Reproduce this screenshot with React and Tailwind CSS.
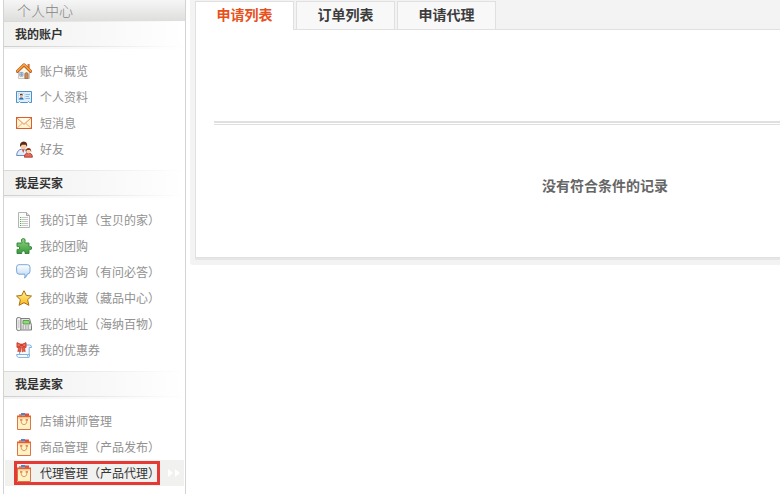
import { useState } from "react";

function HouseIcon() {
	return (
		<svg viewBox="0 0 16 16" className="w-4 h-4 shrink-0">
			<path d="M2.500 8v7.500h11V8L8 3z" fill="#fdf6e3" stroke="#b9a58a" strokeWidth=".6" />
			<rect x="11.500" y="1" width="2.200" height="4" fill="#d9743a" />
			<path d="M1.300 8.300 8 1.800l6.700 6.500" fill="none" stroke="#b5531c" strokeWidth="3" strokeLinecap="round" strokeLinejoin="round" />
			<path d="M1.300 8.100 8 1.700l6.700 6.400" fill="none" stroke="#f7a23c" strokeWidth="1.600" strokeLinecap="round" strokeLinejoin="round" />
			<path d="M8.800 15.500v-5q1.700-2 3.400 0v5z" fill="#c98a5a" stroke="#8a5a38" strokeWidth=".6" />
			<path d="M3.800 9.400H7v3.800H3.800zM5.400 9.400v3.800M3.800 11.300H7" fill="#dbe9fb" stroke="#6f93c8" strokeWidth=".7" />
		</svg>
	);
}

function CardIcon() {
	return (
		<svg viewBox="0 0 16 16" className="w-4 h-4 shrink-0">
			<path d="M.5 2.500h15v11h-2l-1-1-1 1h-7l-1-1-1 1h-2z" fill="#dff0fd" stroke="#4c8fca" />
			<rect x="2.500" y="4.500" width="5.500" height="6" fill="#fff" stroke="#9cc5e8" strokeWidth=".5" />
			<path d="M3 10.500q0-2.300 2.300-2.300t2.300 2.300z" fill="#2c6bad" />
			<circle cx="5.300" cy="6.800" r="1.500" fill="#f4b183" />
			<path d="M3.700 6.600q0-1.900 1.600-1.900t1.600 1.900l-1.600-.8z" fill="#3a2a22" />
			<path d="M9.500 5.500H14M9.500 7.500H13M9.500 9.500H14" stroke="#8dbbe3" />
		</svg>
	);
}

function MailIcon() {
	return (
		<svg viewBox="0 0 16 16" className="w-4 h-4 shrink-0">
			<rect x=".5" y="2.500" width="15" height="11" fill="#fdf3d0" stroke="#d9602e" />
			<path d="m1 13.200 5.300-5M15 13.200l-5.300-5" stroke="#efab74" />
			<path d="m1 3 7 6.300L15 3" fill="#fffae8" stroke="#e58a50" />
		</svg>
	);
}

function FriendsIcon() {
	return (
		<svg viewBox="0 0 17 17" className="w-[17px] h-[17px] -mr-px shrink-0">
			<path d="M.6 14.500q.4-5.800 5-6.300h3q2.400.6 2.400 6.300z" fill="#e3edfb" stroke="#5d7fb8" strokeWidth=".9" />
			<path d="m6 8.500 1.200 3.500 1.300-3.500z" fill="#d8412b" />
			<circle cx="7.600" cy="5.300" r="3" fill="#f8cda4" />
			<path d="M4 6Q3.400.700 7.800.500 12 .700 11 6L9.800 3.800 6 3.700z" fill="#5b2a16" />
			<path d="M8.400 16.200q0-4.200 4-4.200t4 4.200z" fill="#e26a5c" stroke="#ab2e25" strokeWidth=".8" />
			<circle cx="12.500" cy="10.300" r="2.100" fill="#fad3ad" />
			<path d="M9.700 11q0-4 2.800-4t2.800 4l-1.300-2h-3z" fill="#8c351b" />
		</svg>
	);
}

function OrderIcon() {
	return (
		<svg viewBox="0 0 16 16" className="w-4 h-4 shrink-0">
			<path d="M2.500.5h8l3 3v12h-11z" fill="#fbfbfb" stroke="#b3b3b3" />
			<path d="M10.500.5v3h3" fill="#ddd" stroke="#a3a3a3" />
			<path d="M4 5.500h1.300M4 7.500h1.300M4 9.500h1.300M4 11.500h1.300M4 13.500h1.300" stroke="#4faa4a" />
			<path d="M6 5.500h6M6 7.500h6M6 9.500h6M6 11.500h6M6 13.500h6" stroke="#c6c6c6" />
		</svg>
	);
}

function PuzzleIcon() {
	return (
		<svg viewBox="0 0 16 16" className="w-4 h-4 shrink-0">
			<defs>
				<linearGradient id="puzzle" x1="0" y1="0" x2="0" y2="1">
					<stop offset="0" stopColor="#8fd47f" />
					<stop offset="1" stopColor="#3a9a3c" />
				</linearGradient>
			</defs>
			<path
				d="M1 5h4.800q.4-.8-.3-1.500Q4.800.600 7.300.500q2.500.1 1.800 3Q8.500 4.200 9 5h4v3.600q.6.300 1.200-.1 1.400-.3 1.400 1.500t-1.400 1.500q-.6-.4-1.200 0v4H9q-.2-.7.100-1.200 0-1.400-1.700-1.400t-1.700 1.400q.3.500.1 1.200H1v-4q.6-.4 1.200 0 1.500.1 1.500-1.500T2.200 8.500q-.6.300-1.200 0z"
				fill="url(#puzzle)"
				stroke="#2e7f34"
				strokeWidth=".9"
			/>
		</svg>
	);
}

function ChatIcon() {
	return (
		<svg viewBox="0 0 16 16" className="w-4 h-4 shrink-0">
			<defs>
				<linearGradient id="chat" x1="0" y1="0" x2="0" y2="1">
					<stop offset="0" stopColor="#fff" />
					<stop offset="1" stopColor="#b5d5f6" />
				</linearGradient>
			</defs>
			<path
				d="M3 .7h8.500q2.500 0 2.500 2.500v4q0 2.900-2.800 3-.2 2.600-2.700 3.800.9-2 .3-3.800H3Q.6 10.200.6 7.200v-4Q.6.700 3 .7z"
				fill="url(#chat)"
				stroke="#6d9ed2"
				strokeWidth=".9"
			/>
		</svg>
	);
}

function StarIcon() {
	return (
		<svg viewBox="0 0 16 16" className="w-4 h-4 shrink-0">
			<defs>
				<linearGradient id="star" x1="0" y1="0" x2="0" y2="1">
					<stop offset="0" stopColor="#fff29a" />
					<stop offset="1" stopColor="#fbb81c" />
				</linearGradient>
			</defs>
			<path
				d="m8 .7 2.300 4.700 5.200.6-3.900 3.700 1.300 5.600L8 12.700l-4.900 2.600 1.300-5.600L.5 6l5.200-.6z"
				fill="url(#star)"
				stroke="#a8700c"
				strokeLinejoin="round"
			/>
		</svg>
	);
}

function PhoneIcon() {
	return (
		<svg viewBox="0 0 16 16" className="w-4 h-4 shrink-0">
			<path d="M4.500 2.500h9l2 7v4.500h-11z" fill="#e6e6e6" stroke="#7d7d7d" strokeLinejoin="round" />
			<rect x=".6" y="1.500" width="4.300" height="13" rx="1.600" fill="#f0f0f0" stroke="#7d7d7d" />
			<path d="M2.800 4v8" stroke="#c4c4c4" />
			<path d="M7 4.500h6l.9 3.500H7z" fill="#8fdb76" stroke="#4b8f3e" strokeWidth=".8" />
			<path d="M6.500 10h7.500M6.500 12h7.500" stroke="#8a8a8a" strokeDasharray="1.500 1" />
		</svg>
	);
}

function CouponIcon() {
	return (
		<svg viewBox="0 0 16 16" className="w-4 h-4 shrink-0">
			<path d="M3.500 3h10.300q1.700.1 1.700 2.500h-2.300V13h-9.700z" fill="#f3f9ff" stroke="#7fb0e0" />
			<path d="M2 12.500h9.500q-.3 2.500 1.700 2.900H2.500Q.5 15 .6 12.500z" fill="#fff" stroke="#7fb0e0" />
			<path d="M11.500 12.500h2q.3 2.400-.8 2.900" fill="#dcecfb" stroke="#7fb0e0" />
			<path d="M2.500 5h2.700L4.600 10l-1.500-1-1.300.7zM5.800 5h2.700l.7 4.700-1.300-.7-1.500 1z" fill="#ec5f45" stroke="#c2301f" strokeWidth=".6" />
			<path d="M4.700 2.300 1 .700v4.800l3.700-1.600zM6.300 2.300l3.700-1.600v4.800L6.300 3.900z" fill="#f0705a" stroke="#c2301f" strokeWidth=".9" strokeLinejoin="round" />
			<rect x="4.400" y="1.700" width="2.200" height="3" fill="#d63c28" />
		</svg>
	);
}

function BagIcon() {
	return (
		<svg viewBox="0 0 16 17" className="w-4 h-[17px] shrink-0">
			<path d="M1.500 3.500h13v13h-13z" fill="#fff3c4" stroke="#dd7347" />
			<path d="M3 1h2.500v2H3z" fill="#f0906a" />
			<path d="M5 0h4v2.500H5z" fill="#4a86cf" />
			<path d="M9 .5h4V3H9z" fill="#e2493a" />
			<path d="M1 2.500h14v1.500H1z" fill="#dc6238" />
			<path d="M2 4h12v1.500H2z" fill="#f9c58f" />
			<path d="M5.200 7v2q.4 2.700 2.800 2.700T10.800 9V7" fill="none" stroke="#e69a70" />
			<path d="M4 6.800h2.400M9.600 6.800H12" stroke="#d8703f" strokeWidth="1.200" />
		</svg>
	);
}

const sections = [
	{
		title: "我的账户",
		items: [
			{ label: "账户概览", Icon: HouseIcon },
			{ label: "个人资料", Icon: CardIcon },
			{ label: "短消息", Icon: MailIcon },
			{ label: "好友", Icon: FriendsIcon },
		],
	},
	{
		title: "我是买家",
		items: [
			{ label: "我的订单（宝贝的家）", Icon: OrderIcon },
			{ label: "我的团购", Icon: PuzzleIcon },
			{ label: "我的咨询（有问必答）", Icon: ChatIcon },
			{ label: "我的收藏（藏品中心）", Icon: StarIcon },
			{ label: "我的地址（海纳百物）", Icon: PhoneIcon },
			{ label: "我的优惠券", Icon: CouponIcon },
		],
	},
	{
		title: "我是卖家",
		items: [
			{ label: "店铺讲师管理", Icon: BagIcon },
			{ label: "商品管理（产品发布）", Icon: BagIcon },
			{ label: "代理管理（产品代理）", Icon: BagIcon, current: true },
		],
	},
];

const tabs = ["申请列表", "订单列表", "申请代理"];

function MenuItem({ label, Icon, current }) {
	return (
		<li className={current ? "relative mx-px bg-[#f1f1f0]" : "mx-px"}>
			<a
				href="#"
				className={`flex items-center h-[26px] pl-[11px] gap-2 whitespace-nowrap ${
					current ? "text-[#333]" : "text-[#919191] hover:text-[#333]"
				}`}
			>
				<Icon />
				<span>{label}</span>
				{current && (
					<svg viewBox="0 0 13 10" className="w-[13px] h-[10px] shrink-0">
						<path d="M0 1l5 4-5 4zM7 1l5 4-5 4z" fill="#fff" />
					</svg>
				)}
			</a>
			{current && (
				<span className="absolute inset-y-px left-[9px] w-[146px] border-3 border-[#e53935] pointer-events-none" />
			)}
		</li>
	);
}

function Sidebar() {
	return (
		<aside className="w-[183px] shrink-0 border-x border-[#d3d3d3]">
			<h1 className="h-[21px] pl-[13px] text-[14px] leading-5 text-[#858585] font-light bg-linear-to-b from-[#f6f6f6] to-[#dededd]">
				个人中心
			</h1>
			{sections.map((section) => (
				<section key={section.title}>
					<div className="h-px bg-linear-to-r from-[#d8d8d8] to-white" />
					<h2 className="h-6 pl-[11px] leading-6 font-bold text-[#333] bg-linear-to-r from-[#f2f2f1] via-[#f8f8f8] to-white">
						{section.title}
					</h2>
					<div className="h-px bg-linear-to-r from-[#cfcfcf] to-white" />
					<div className="h-[2px] bg-linear-to-r from-[#f3f3f3] to-white" />
					<ul className="pt-[9px] pb-2">
						{section.items.map((item) => (
							<MenuItem key={item.label} {...item} />
						))}
					</ul>
				</section>
			))}
		</aside>
	);
}

export default function App() {
	const [activeTab, setActiveTab] = useState(tabs[0]);

	return (
		<div className="flex items-start gap-1 px-[3px] bg-white text-[12px] font-['Noto_Sans_CJK_SC',sans-serif]">
			<Sidebar />
			<main className="flex-1 min-w-0 overflow-hidden">
				<div className="min-w-[830px] pt-px px-[5px] pb-[5px] bg-[#f3f3f3] rounded-b-[3px]">
					<div role="tablist" className="flex gap-[2px]">
						{tabs.map((tab) => (
							<button
								key={tab}
								role="tab"
								aria-selected={tab === activeTab}
								onClick={() => setActiveTab(tab)}
								className={`w-[99px] border border-b-0 border-[#e0e0e0] text-[14px] leading-6 font-bold ${
									tab === activeTab
										? "h-[29px] -mb-px pb-1 bg-white text-[#e8501c] relative"
										: "h-[28px] pb-[3px] bg-[#f8f8f8] text-[#3c3c3c]"
								}`}
							>
								{tab}
							</button>
						))}
					</div>
					<div className="bg-white border border-[#e0e0e0] px-[18px] pt-[91px] pb-[60px]">
						<div className="h-1 border-t-2 border-b border-[#e0e0e0]" />
						<p className="pt-12 text-center text-[14px] leading-6 font-bold text-[#666]">
							没有符合条件的记录
						</p>
					</div>
					<div className="h-[2px] bg-[#e6e6e6]" />
				</div>
			</main>
		</div>
	);
}
